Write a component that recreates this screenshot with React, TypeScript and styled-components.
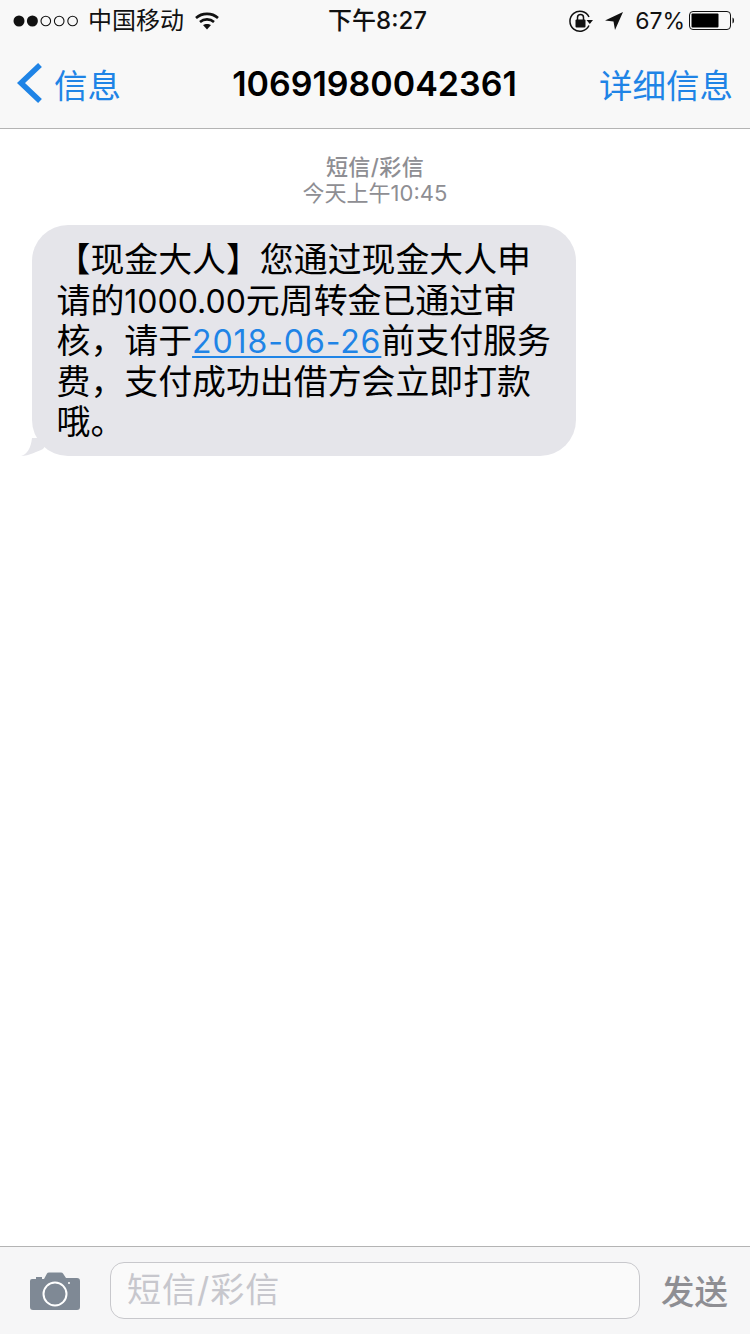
import React from "react";
import styled, { createGlobalStyle } from "styled-components";

const Global = createGlobalStyle`
  html, body { margin: 0; padding: 0; background: #fff; }
  * { box-sizing: border-box; }
`;
const FONT = `"Inter", "Noto Sans CJK SC", sans-serif`;
const BLUE = "#1f84e6";

const Page = styled.div`
  width: 750px; height: 1334px; display: flex; flex-direction: column;
  font-family: ${FONT}; color: #000; background: #fff; overflow: hidden;
`;
const Header = styled.header`
  height: 129px; background: #f8f8f8; border-bottom: 1px solid #b4b4b4; flex: none;
`;
const StatusBar = styled.div`
  height: 40px; display: grid; grid-template-columns: 1fr auto 1fr; align-items: center;
  font-size: 24px; color: #111; padding: 2px 15px 0 13px;
`;
const StatusLeft = styled.div`display: flex; align-items: center; gap: 8px;`;
const Carrier = styled.span`line-height: 38px; margin-right: 2px; margin-left: -1px;`;
const StatusTime = styled.div`font-weight: 500; font-size: 24px; padding-left: 7px; line-height: 38px;`;
const StatusRight = styled.div`display: flex; align-items: center; justify-content: flex-end;`;
const Percent = styled.span`font-size: 23px; margin: 0 4px 0 11px; line-height: 38px;`;
const Nav = styled.nav`
  height: 88px; display: grid; grid-template-columns: 1fr auto 1fr; align-items: center; padding: 0 17px 2px 16px;
`;
const BackLink = styled.div`display: flex; align-items: center; gap: 11px; color: ${BLUE}; font-size: 33.5px;`;
const Title = styled.h1`margin: 0; font-size: 34px; font-weight: 600; font-family: ${FONT};`;
const Detail = styled.div`text-align: right; color: ${BLUE}; font-size: 33.5px;`;
const Thread = styled.main`flex: 1; display: flex; flex-direction: column; padding-top: 25px;`;
const Stamp = styled.div`
  text-align: center; color: #8e8e93; font-size: 22px; line-height: 26px;
`;
const StampKind = styled.div`font-weight: 500; letter-spacing: 0.4px;`;
const BubbleRow = styled.div`padding: 19px 0 0 32px;`;
const Bubble = styled.div`
  position: relative; width: 544px; height: 231px; background: #e5e5ea; border-radius: 36px;
  padding: 15px 0 0 24.5px; font-size: 33.9px; color: #000;
`;
const Line = styled.div`white-space: nowrap; height: 40.5px; line-height: 40.5px;`;
const Latin = styled.span`font-size: 32px;`;
const DateLink = styled.span`
  font-size: 32px; letter-spacing: 0.9px; color: ${BLUE};
  text-decoration: underline; text-decoration-thickness: 2px; text-underline-offset: 3px;
`;
const Tail = styled.svg`position: absolute; left: -11px; bottom: 0;`;
const Composer = styled.footer`
  flex: none; height: 88px; background: #f6f6f7; border-top: 1px solid #b4b4b4;
  display: flex; align-items: center; padding: 0 22px 0 30px;
`;
const CameraSlot = styled.div`flex: none; display: flex;`;
const Field = styled.div`
  flex: none; width: 530px; height: 57px; margin: 0 22px 0 30px; border: 1px solid #c8c8cc; border-radius: 14px; background: #fafafa;
  color: #c7c7cd; font-size: 34px; line-height: 53px; padding-left: 16px; letter-spacing: 1px; white-space: nowrap;
`;
const Send = styled.div`flex: none; white-space: nowrap; color: #8e8e93; font-size: 33.5px; font-weight: 500; margin: -2px 0 0 -1px;`;

const Dots = () => (
  <svg width="68" height="14" viewBox="0 0 68 14">
    {[0, 1, 2, 3, 4].map((i) => (
      <circle key={i} cx={6 + i * 13.4} cy="7" r={i < 2 ? 5.5 : 4.8} fill={i < 2 ? "#111" : "none"} stroke="#111" strokeWidth={i < 2 ? 0 : 1.1} />
    ))}
  </svg>
);
const Wifi = () => (
  <svg width="26" height="20" viewBox="0 0 26 20" fill="none" stroke="#111" strokeWidth="2.6">
    <path d="M2 7 C8 1.5 18 1.5 24 7" />
    <path d="M6 11 C10 7.5 16 7.5 20 11" />
    <path d="M13 18.5 L9 14 C11 12.5 15 12.5 17 14 Z" fill="#111" stroke="none" />
  </svg>
);
const Lock = () => (
  <svg width="24" height="24" viewBox="0 0 24 24" fill="none">
    <path d="M20 8 A10 10 0 1 0 20 16.5" stroke="#111" strokeWidth="1.5" />
    <path d="M24 11 L17.5 11 L20.8 15 Z" fill="#111" />
    <rect x="6.5" y="10.5" width="10" height="8" rx="1" fill="#111" />
    <path d="M8.5 11 V8.5 a3 3 0 0 1 6 0 V11" stroke="#111" strokeWidth="1.5" />
  </svg>
);
const ArrowIcon = styled.svg`margin-left: 11px;`;
const Arrow = () => (
  <ArrowIcon width="20" height="20" viewBox="0 0 20 20">
    <path d="M19 1 L1 9.5 L9.5 10.5 L11 19 Z" fill="#111" />
  </ArrowIcon>
);
const Battery = () => (
  <svg width="46" height="20" viewBox="0 0 46 20">
    <rect x="0.5" y="0.5" width="41" height="18" rx="3.5" fill="none" stroke="#111" />
    <rect x="2.5" y="2.5" width="27" height="14" rx="1" fill="#000" />
    <path d="M43.5 6.5 C45.5 7 45.5 12 43.5 12.5 Z" fill="#111" />
  </svg>
);
const Chevron = () => (
  <svg width="27" height="42" viewBox="0 0 27 42" fill="none">
    <path d="M24 3 L5 21 L24 39" stroke={BLUE} strokeWidth="5.5" />
  </svg>
);
const Camera = () => (
  <svg width="50" height="38" viewBox="0 0 50 38">
    <path d="M2 7 H6 V5 H12 V7 H14 L17 1.5 Q17.5 0.5 19 0.5 H31 Q32.5 0.5 33 1.5 L36 6 H47 Q50 6 50 9 V35 Q50 38 47 38 H3 Q0 38 0 35 V9 Q0 7 2 7 Z" fill="#7f8995" />
    <circle cx="25" cy="22" r="11.5" fill="none" stroke="#fff" strokeWidth="2" />
    <circle cx="39" cy="11" r="1" fill="#fff" />
  </svg>
);

export default function App() {
  return (
    <Page>
      <Global />
      <Header>
        <StatusBar>
          <StatusLeft>
            <Dots />
            <Carrier>中国移动</Carrier>
            <Wifi />
          </StatusLeft>
          <StatusTime>下午8:27</StatusTime>
          <StatusRight>
            <Lock />
            <Arrow />
            <Percent>67%</Percent>
            <Battery />
          </StatusRight>
        </StatusBar>
        <Nav>
          <BackLink><Chevron />信息</BackLink>
          <Title>10691980042361</Title>
          <Detail>详细信息</Detail>
        </Nav>
      </Header>
      <Thread>
        <Stamp>
          <StampKind>短信/彩信</StampKind>
          今天上午10:45
        </Stamp>
        <BubbleRow>
          <Bubble>
            <Line>【现金大人】您通过现金大人申</Line>
            <Line>请的<Latin>1000.00</Latin>元周转金已通过审</Line>
            <Line>核，请于<DateLink>2018-06-26</DateLink>前支付服务</Line>
            <Line>费，支付成功出借方会立即打款</Line>
            <Line>哦。</Line>
            <Tail width="32" height="18" viewBox="0 0 32 18">
              <path d="M0 18 C6 16.5 10 10 11 0 L30 0 L22 11 C17 13 8 18 0 18 Z" fill="#e5e5ea" />
            </Tail>
          </Bubble>
        </BubbleRow>
      </Thread>
      <Composer>
        <CameraSlot><Camera /></CameraSlot>
        <Field>短信/彩信</Field>
        <Send>发送</Send>
      </Composer>
    </Page>
  );
}
